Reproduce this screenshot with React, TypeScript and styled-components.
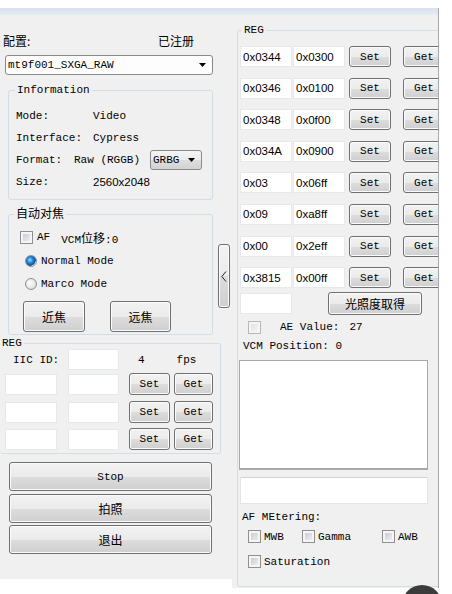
import React from "react";
import styled, { createGlobalStyle } from "styled-components";

const GlobalStyle = createGlobalStyle`
  html, body {
    margin: 0;
    padding: 0;
    background: #ffffff;
  }
  body {
    font-family: "Liberation Mono", "Noto Sans CJK SC", monospace;
    font-size: 11px;
    color: #000;
  }
  * {
    box-sizing: border-box;
  }
`;

const Page = styled.div`
  position: relative;
  width: 452px;
  height: 594px;
  overflow: hidden;
  padding-top: 8px;
`;

const Window = styled.div`
  width: 439px;
  border-right: 1px solid #a7a7a7;
`;

const TitleBand = styled.div`
  height: 7px;
  background: linear-gradient(#d9e1ee, #e6ebf4);
`;

const Main = styled.div`
  display: flex;
  align-items: flex-start;
`;

const LeftPane = styled.div`
  width: 232px;
  height: 564px;
  background: #f0f0f0;
  display: flex;
`;

const LeftColumn = styled.div`
  width: 218px;
  display: flex;
  flex-direction: column;
`;

const RightPane = styled.div`
  width: 206px;
  height: 573px;
  background: #f0f0f0;
  padding: 9px 0 0 5px;
  overflow: hidden;
`;

const Cjk = styled.span`
  font-family: "Noto Sans CJK SC", sans-serif;
  font-size: 12px;
`;

const Sans = styled.span`
  font-family: "Liberation Sans", sans-serif;
  font-size: 11.5px;
`;

const HeaderRow = styled.div`
  margin-top: 19px;
  height: 14px;
  line-height: 14px;
  padding-left: 3px;
  display: flex;
  font-family: "Noto Sans CJK SC", sans-serif;
  font-size: 12px;
`;

const HeaderLabel = styled.span`
  width: 155px;
`;

const Combo = styled.div<{ $w: number; $flat?: boolean }>`
  width: ${(p) => p.$w}px;
  height: 20px;
  display: flex;
  align-items: center;
  justify-content: space-between;
  padding: 0 6px 0 2px;
  border: 1px solid #8a8a8a;
  border-radius: 3px;
  background: ${(p) => (p.$flat ? "#fdfdfd" : "linear-gradient(#f4f4f4 0%, #ececec 50%, #dedede 51%, #d2d2d2 100%)")};
`;

const TopCombo = styled(Combo)`
  margin: 7px 0 0 5px;
`;

const Arrow = () => (
  <svg width="7" height="4" viewBox="0 0 7 4">
    <path d="M0 0 H7 L3.5 4 Z" fill="#000" />
  </svg>
);

const Group = styled.fieldset<{ $w: number; $noLeft?: boolean }>`
  margin: 0;
  padding: 0;
  min-width: 0;
  width: ${(p) => p.$w}px;
  border: 1px solid #d3dde4;
  border-left: ${(p) => (p.$noLeft ? "none" : "1px solid #d3dde4")};
  border-radius: 3px;
`;

const Legend = styled.legend<{ $x: number; $lh?: number }>`
  padding: 0 2px;
  margin-left: ${(p) => p.$x}px;
  line-height: ${(p) => p.$lh ?? 12}px;
`;

const InfoGroup = styled(Group)`
  margin: 9px 0 0 8px;
`;

const InfoBody = styled.div`
  padding: 9px 0 6px 7px;
`;

const InfoRow = styled.div`
  height: 22px;
  display: flex;
  align-items: center;
`;

const InfoLabel = styled.span<{ $w: number }>`
  width: ${(p) => p.$w}px;
  flex: none;
`;

const FocusGroup = styled(Group)`
  margin: 6px 0 0 8px;
`;

const FocusBody = styled.div`
  padding: 8px 0 2px 11px;
  display: flex;
  flex-direction: column;
`;

const LineRow = styled.div<{ $mt?: number; $ml?: number; $h?: number }>`
  display: flex;
  align-items: center;
  height: ${(p) => p.$h ?? 14}px;
  margin-top: ${(p) => p.$mt ?? 0}px;
  margin-left: ${(p) => p.$ml ?? 0}px;
`;

const Gap = styled.span<{ $w: number }>`
  display: inline-block;
  width: ${(p) => p.$w}px;
  flex: none;
`;

const Check = styled.span<{ $faded?: boolean }>`
  width: 13px;
  height: 13px;
  flex: none;
  border: 1px solid ${(p) => (p.$faded ? "#b8b8b8" : "#8f8f8f")};
  background: #f5f5f5;
  box-shadow: inset 0 0 0 1px #f5f5f5;
  position: relative;
  &::after {
    content: "";
    position: absolute;
    inset: 2px;
    background: ${(p) =>
      p.$faded ? "linear-gradient(135deg, #e2e2e2, #f4f4f4)" : "linear-gradient(135deg, #c9ccd1, #eeeeef)"};
  }
`;

const Radio = styled.span<{ $on?: boolean }>`
  width: 12px;
  height: 12px;
  flex: none;
  border-radius: 50%;
  border: 1px solid #8f8f8f;
  background: ${(p) =>
    p.$on
      ? "radial-gradient(circle at 40% 40%, #9fdcff 0%, #1e86d6 35%, #0b4f9c 65%, #e8e8e8 70%)"
      : "radial-gradient(circle at 40% 40%, #ffffff 0%, #dcdcdc 80%)"};
`;

const Button = styled.div<{ $w: number; $h: number; $ml?: number; $mt?: number }>`
  width: ${(p) => p.$w}px;
  height: ${(p) => p.$h}px;
  margin-left: ${(p) => p.$ml ?? 0}px;
  margin-top: ${(p) => p.$mt ?? 0}px;
  flex: none;
  display: flex;
  align-items: center;
  justify-content: center;
  border: 1px solid #707070;
  border-radius: 3px;
  background: linear-gradient(#f2f2f2 0%, #ebebeb 50%, #dddddd 51%, #cfcfcf 100%);
  box-shadow: inset 0 0 0 1px #fbfbfb;
`;

const Toggle = styled(Button)`
  margin-top: 229px;
`;

const Chevron = () => (
  <svg width="6" height="11" viewBox="0 0 6 11">
    <polyline points="5,0.5 0.8,5.5 5,10.5" fill="none" stroke="#222" strokeWidth="1" />
  </svg>
);

const Field = styled.div<{ $w: number; $h?: number; $ml?: number }>`
  width: ${(p) => p.$w}px;
  height: ${(p) => p.$h ?? 21}px;
  margin-left: ${(p) => p.$ml ?? 0}px;
  flex: none;
  display: flex;
  align-items: center;
  padding-left: 2px;
  background: #ffffff;
  border: 1px solid #e5e9ed;
  font-family: "Liberation Sans", sans-serif;
  font-size: 11.5px;
`;

const RegGroup = styled(Group)`
  margin: 3px 0 0 0;
`;

const RegBody = styled.div`
  padding: 1px 0 3px 5px;
  display: flex;
  flex-direction: column;
`;

const ActionStack = styled.div`
  margin: 8px 0 0 9px;
  display: flex;
  flex-direction: column;
  gap: 2.5px;
`;

const RightGroup = styled(Group)`
  height: 563px;
`;

const RightBody = styled.div`
  padding: 10px 0 0 2px;
  display: flex;
  flex-direction: column;
`;

const RegList = styled.div`
  display: flex;
  flex-direction: column;
  gap: 10.6px;
`;

const Memo = styled.div<{ $h: number; $strong?: boolean; $ml?: number; $mt: number }>`
  width: ${(p) => (p.$strong ? 189 : 188)}px;
  height: ${(p) => p.$h}px;
  margin-left: ${(p) => p.$ml ?? 0}px;
  margin-top: ${(p) => p.$mt}px;
  background: #ffffff;
  border: 1px solid ${(p) => (p.$strong ? "#a6a8b0" : "#e2e6ea")};
  border-bottom-width: ${(p) => (p.$strong ? 2 : 1)}px;
  border-top-color: ${(p) => (p.$strong ? "#a6a8b0" : "#cfd3d8")};
`;

const CheckItem = styled.div<{ $w?: number }>`
  display: flex;
  align-items: center;
  gap: 3px;
  width: ${(p) => (p.$w ? `${p.$w}px` : "auto")};
  flex: none;
`;

const Shadow = styled.div`
  position: absolute;
  left: 402px;
  top: 585px;
  width: 40px;
  height: 40px;
  border-radius: 50%;
  background: #3b3b3b;
`;

const rightRegs: [string, string][] = [
  ["0x0344", "0x0300"],
  ["0x0346", "0x0100"],
  ["0x0348", "0x0f00"],
  ["0x034A", "0x0900"],
  ["0x03", "0x06ff"],
  ["0x09", "0xa8ff"],
  ["0x00", "0x2eff"],
  ["0x3815", "0x00ff"],
];

function LeftRegRow({ mt }: { mt: number }) {
  return (
    <LineRow $mt={mt} $h={22}>
      <Field $w={52} />
      <Field $w={51} $ml={11} />
      <Button $w={41} $h={22} $ml={10}>Set</Button>
      <Button $w={39} $h={22} $ml={4}>Get</Button>
    </LineRow>
  );
}

export default function App() {
  return (
    <Page>
      <GlobalStyle />
      <Window>
        <TitleBand />
        <Main>
          <LeftPane>
            <LeftColumn>
              <HeaderRow>
                <HeaderLabel>配置:</HeaderLabel>
                <span>已注册</span>
              </HeaderRow>
              <TopCombo $w={208} $flat>
                <span>mt9f001_SXGA_RAW</span>
                <Arrow />
              </TopCombo>

              <InfoGroup $w={205}>
                <Legend $x={6}>Information</Legend>
                <InfoBody>
                  <InfoRow>
                    <InfoLabel $w={77}>Mode:</InfoLabel>
                    <span>Video</span>
                  </InfoRow>
                  <InfoRow>
                    <InfoLabel $w={77}>Interface:</InfoLabel>
                    <span>Cypress</span>
                  </InfoRow>
                  <InfoRow>
                    <InfoLabel $w={58}>Format:</InfoLabel>
                    <InfoLabel $w={76}>Raw (RGGB)</InfoLabel>
                    <Combo $w={52}>
                      <span>GRBG</span>
                      <Arrow />
                    </Combo>
                  </InfoRow>
                  <InfoRow>
                    <InfoLabel $w={77}>Size:</InfoLabel>
                    <Sans>2560x2048</Sans>
                  </InfoRow>
                </InfoBody>
              </InfoGroup>

              <FocusGroup $w={205}>
                <Legend $x={5} $lh={14}>
                  <Cjk>自动对焦</Cjk>
                </Legend>
                <FocusBody>
                  <LineRow>
                    <Check />
                    <Gap $w={4} />
                    <span>AF</span>
                    <Gap $w={11} />
                    <span>
                      VCM<Cjk>位移</Cjk>:0
                    </span>
                  </LineRow>
                  <LineRow $mt={10} $ml={5}>
                    <Radio $on />
                    <Gap $w={4} />
                    <span>Normal Mode</span>
                  </LineRow>
                  <LineRow $mt={9} $ml={5}>
                    <Radio />
                    <Gap $w={4} />
                    <span>Marco Mode</span>
                  </LineRow>
                  <LineRow $mt={10} $h={31}>
                    <Button $w={62} $h={31} $ml={3}>
                      <Cjk>近焦</Cjk>
                    </Button>
                    <Button $w={61} $h={31} $ml={25}>
                      <Cjk>远焦</Cjk>
                    </Button>
                  </LineRow>
                </FocusBody>
              </FocusGroup>

              <RegGroup $w={221} $noLeft>
                <Legend $x={0} $lh={10}>
                  REG
                </Legend>
                <RegBody>
                  <LineRow $h={21}>
                    <InfoLabel $w={63} style={{ paddingLeft: 8 }}>
                      IIC ID:
                    </InfoLabel>
                    <Field $w={51} />
                    <Gap $w={19} />
                    <span>4</span>
                    <Gap $w={32} />
                    <span>fps</span>
                  </LineRow>
                  <LeftRegRow mt={3} />
                  <LeftRegRow mt={6} />
                  <LeftRegRow mt={5} />
                </RegBody>
              </RegGroup>

              <ActionStack>
                <Button $w={203} $h={29}>Stop</Button>
                <Button $w={203} $h={29}>
                  <Cjk>拍照</Cjk>
                </Button>
                <Button $w={203} $h={29}>
                  <Cjk>退出</Cjk>
                </Button>
              </ActionStack>
            </LeftColumn>
            <Toggle $w={12} $h={64}>
              <Chevron />
            </Toggle>
          </LeftPane>

          <RightPane>
            <RightGroup $w={215}>
              <Legend $x={4}>REG</Legend>
              <RightBody>
                <RegList>
                  {rightRegs.map(([addr, val]) => (
                    <LineRow key={addr} $h={21}>
                      <Field $w={52}>{addr}</Field>
                      <Field $w={52} $ml={1}>
                        {val}
                      </Field>
                      <Button $w={42} $h={21} $ml={4}>Set</Button>
                      <Button $w={42} $h={21} $ml={12}>Get</Button>
                    </LineRow>
                  ))}
                </RegList>
                <LineRow $mt={4} $h={23}>
                  <Field $w={52} />
                  <Button $w={94} $h={23} $ml={36}>
                    <Cjk>光照度取得</Cjk>
                  </Button>
                </LineRow>
                <LineRow $mt={5} $ml={8}>
                  <Check $faded />
                  <Gap $w={19} />
                  <span>AE Value:</span>
                  <Gap $w={10} />
                  <span>27</span>
                </LineRow>
                <LineRow $mt={5} $ml={3}>
                  <span>VCM Position: 0</span>
                </LineRow>
                <Memo $h={110} $mt={7} $ml={-1} $strong />
                <Memo $h={27} $mt={7} />
                <LineRow $mt={6} $ml={2}>
                  <span>AF MEtering:</span>
                </LineRow>
                <LineRow $mt={6} $ml={8} $h={13}>
                  <CheckItem $w={54}>
                    <Check />
                    <span>MWB</span>
                  </CheckItem>
                  <CheckItem $w={80}>
                    <Check />
                    <span>Gamma</span>
                  </CheckItem>
                  <CheckItem>
                    <Check />
                    <span>AWB</span>
                  </CheckItem>
                </LineRow>
                <LineRow $mt={12} $ml={8} $h={13}>
                  <CheckItem>
                    <Check />
                    <span>Saturation</span>
                  </CheckItem>
                </LineRow>
              </RightBody>
            </RightGroup>
          </RightPane>
        </Main>
      </Window>
      <Shadow />
    </Page>
  );
}
